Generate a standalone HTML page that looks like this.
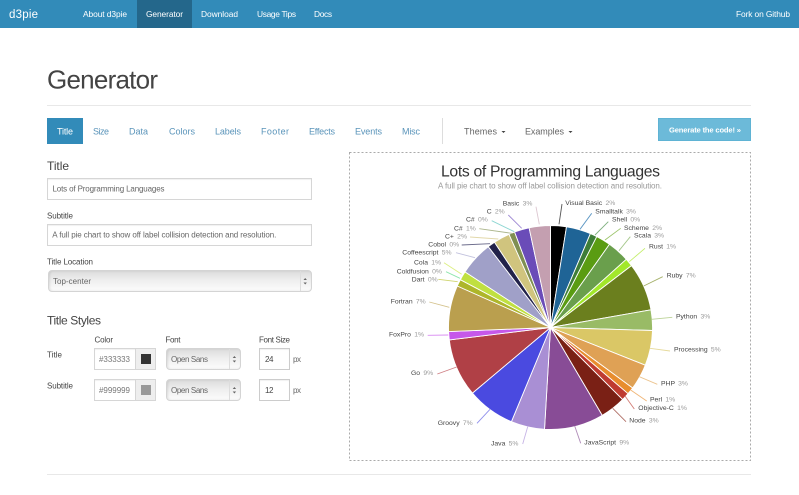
<!DOCTYPE html>
<html lang="en">
<head>
<meta charset="utf-8">
<title>d3pie Generator</title>
<style>
html,body{margin:0;padding:0;background:#fff;width:799px;height:495px;overflow:hidden}
#w{position:relative;width:799px;height:495px;overflow:hidden;filter:blur(.35px);font-family:"Liberation Sans",sans-serif}
#w div{position:absolute;box-sizing:border-box}
.in{background:#fff;border:1px solid #d6d6d6;box-shadow:inset 0 1px 1px rgba(0,0,0,.06)}
.sel{border:1px solid #d4d4d4;border-radius:4px;background:linear-gradient(#dcdcdc,#eeeeee 45%,#fcfcfc);box-shadow:inset 1px 0 2px rgba(0,0,0,.1)}
svg{position:absolute;left:0;top:0}
</style>
</head>
<body>
<div id="w">
<div style="left:0;top:0;width:799px;height:27.5px;background:#328bb9"></div>
<div style="left:136.5px;top:0;width:55.5px;height:27.5px;background:#24678b"></div>
<div style="left:47px;top:105px;width:704px;height:1px;background:#e8e8e8"></div>
<div style="left:47px;top:118px;width:36px;height:26px;background:#328bb9"></div>
<div style="left:442px;top:118px;width:1px;height:26px;background:#ddd"></div>
<div style="left:658px;top:118px;width:93px;height:23px;background:#6cbad9;border:1px solid #5fb3d4"></div>

<div class="in" style="left:47px;top:178px;width:265px;height:21.5px"></div>
<div class="in" style="left:47px;top:224px;width:265px;height:21.5px"></div>
<div class="sel" style="left:47.5px;top:270px;width:264.5px;height:21.5px"></div>
<div style="left:300px;top:271px;width:1px;height:20px;background:#ddd"></div>

<div class="in" style="left:94px;top:348px;width:62px;height:21.5px"></div>
<div style="left:135px;top:349px;width:20px;height:20px;background:#eee;border-left:1px solid #d6d6d6"></div>
<div style="left:141px;top:354px;width:10px;height:10px;background:#333"></div>
<div class="in" style="left:94px;top:379px;width:62px;height:21.5px"></div>
<div style="left:135px;top:380px;width:20px;height:20px;background:#eee;border-left:1px solid #d6d6d6"></div>
<div style="left:141px;top:385px;width:10px;height:10px;background:#999"></div>

<div class="sel" style="left:165.5px;top:348px;width:75px;height:21.5px"></div>
<div style="left:229px;top:349px;width:1px;height:20px;background:#ddd"></div>
<div class="sel" style="left:165.5px;top:379px;width:75px;height:21.5px"></div>
<div style="left:229px;top:380px;width:1px;height:20px;background:#ddd"></div>

<div class="in" style="left:259px;top:348px;width:31px;height:21.5px;border-color:#ccc"></div>
<div class="in" style="left:259px;top:379px;width:31px;height:21.5px;border-color:#ccc"></div>
<div style="left:47px;top:474px;width:704px;height:1px;background:#e8e8e8"></div>

<svg width="799" height="495" viewBox="0 0 799 495" font-family="'Liberation Sans',sans-serif">
<rect x="349.5" y="152.5" width="401" height="308" fill="none" stroke="#aaa" stroke-width="1" stroke-dasharray="2 2"/>
<g fill="#fff" font-size="8.4">
<text x="9" y="18" font-size="11.5" textLength="29">d3pie</text>
<text x="83" y="17" textLength="44">About d3pie</text>
<text x="146" y="17" textLength="37">Generator</text>
<text x="201" y="17" textLength="37">Download</text>
<text x="257" y="17" textLength="39">Usage Tips</text>
<text x="314" y="17" textLength="18">Docs</text>
<text x="736" y="17" textLength="54">Fork on Github</text>
</g>
<text x="47" y="88.5" font-size="26" fill="#444" textLength="111">Generator</text>
<g font-size="9" fill="#5a94ba">
<text x="57" y="134.5" fill="#fff" textLength="16">Title</text>
<text x="93" y="134.5" textLength="16">Size</text>
<text x="129" y="134.5" textLength="19">Data</text>
<text x="169" y="134.5" textLength="26">Colors</text>
<text x="215" y="134.5" textLength="26">Labels</text>
<text x="261" y="134.5" textLength="28">Footer</text>
<text x="309" y="134.5" textLength="26">Effects</text>
<text x="355" y="134.5" textLength="27">Events</text>
<text x="402" y="134.5" textLength="18">Misc</text>
</g>
<g font-size="9" fill="#666">
<text x="464" y="134.5" textLength="33">Themes</text>
<text x="525" y="134.5" textLength="39">Examples</text>
</g>
<path d="M501.5 131h4l-2 2zM568.5 131h4l-2 2z" fill="#444"/>
<text x="669" y="132.5" font-size="7.6" font-weight="bold" fill="#fff" textLength="72">Generate the code! »</text>

<g font-size="12" fill="#444">
<text x="47" y="170" textLength="22">Title</text>
<text x="47" y="324.5" textLength="54">Title Styles</text>
</g>
<g font-size="8" fill="#444">
<text x="47" y="218.7" textLength="26">Subtitle</text>
<text x="47" y="264.7" textLength="46">Title Location</text>
<text x="94.5" y="342.3" textLength="18.5">Color</text>
<text x="165.5" y="342.3" textLength="15">Font</text>
<text x="259" y="342.3" textLength="31">Font Size</text>
<text x="47" y="357.3" textLength="15">Title</text>
<text x="47" y="388.3" textLength="26">Subtitle</text>
</g>
<g font-size="8" fill="#666">
<text x="52.5" y="191.5" textLength="112">Lots of Programming Languages</text>
<text x="52.3" y="237.7" textLength="224">A full pie chart to show off label collision detection and resolution.</text>
<text x="53" y="284" textLength="38">Top-center</text>
<text x="99" y="362" textLength="31" fill="#777">#333333</text>
<text x="99" y="392.8" textLength="31" fill="#777">#999999</text>
<text x="171" y="362" textLength="37">Open Sans</text>
<text x="171" y="392.8" textLength="37">Open Sans</text>
<text x="265" y="362" textLength="8.5" fill="#444">24</text>
<text x="265" y="392.8" textLength="8.5" fill="#444">12</text>
<text x="293" y="362" textLength="8">px</text>
<text x="293" y="392.8" textLength="8">px</text>
</g>
<path d="M303.5 280l1.7-2 1.7 2zM303.5 282.5l1.7 2 1.7-2zM232.7 358l1.7-2 1.7 2zM232.7 360.5l1.7 2 1.7-2zM232.7 389l1.7-2 1.7 2zM232.7 391.5l1.7 2 1.7-2z" fill="#666"/>

<text x="441" y="176.7" font-size="15.7" fill="#333" textLength="219">Lots of Programming Languages</text>
<text x="438" y="188.3" font-size="8" fill="#999" textLength="224">A full pie chart to show off label collision detection and resolution.</text>

<g stroke="#fff" stroke-width=".9" stroke-linejoin="round">
<path fill="#000000" d="M550.5 327.5L550.5 225.5A102 102 0 0 1 566.5 226.75Z"/>
<path fill="#1f6496" d="M550.5 327.5L566.5 226.75A102 102 0 0 1 590.4 233.6Z"/>
<path fill="#3e7d38" d="M550.5 327.5L590.4 233.6A102 102 0 0 1 596.8 236.6Z"/>
<path fill="#5a9c12" d="M550.5 327.5L596.8 236.6A102 102 0 0 1 609.5 244.3Z"/>
<path fill="#6a9f4c" d="M550.5 327.5L609.5 244.3A102 102 0 0 1 626.3 259.3Z"/>
<path fill="#a2e82a" d="M550.5 327.5L626.3 259.3A102 102 0 0 1 631.5 265.6Z"/>
<path fill="#6b7f1e" d="M550.5 327.5L631.5 265.6A102 102 0 0 1 651 309.8Z"/>
<path fill="#99bb66" d="M550.5 327.5L651 309.8A102 102 0 0 1 652.5 330.5Z"/>
<path fill="#dac766" d="M550.5 327.5L652.5 330.5A102 102 0 0 1 645.3 365.2Z"/>
<path fill="#dfa155" d="M550.5 327.5L645.3 365.2A102 102 0 0 1 632.6 388Z"/>
<path fill="#e88d2e" d="M550.5 327.5L632.6 388A102 102 0 0 1 628 393.7Z"/>
<path fill="#bf3b30" d="M550.5 327.5L628 393.7A102 102 0 0 1 622.6 399.6Z"/>
<path fill="#7a2015" d="M550.5 327.5L622.6 399.6A102 102 0 0 1 602.2 415.4Z"/>
<path fill="#884c96" d="M550.5 327.5L602.2 415.4A102 102 0 0 1 544.5 429.3Z"/>
<path fill="#a98fd4" d="M550.5 327.5L544.5 429.3A102 102 0 0 1 511.4 421.7Z"/>
<path fill="#4a4ae0" d="M550.5 327.5L511.4 421.7A102 102 0 0 1 472.4 393.1Z"/>
<path fill="#b04046" d="M550.5 327.5L472.4 393.1A102 102 0 0 1 449.3 339.9Z"/>
<path fill="#c658ea" d="M550.5 327.5L449.3 339.9A102 102 0 0 1 448.6 331.6Z"/>
<path fill="#ba9f4e" d="M550.5 327.5L448.6 331.6A102 102 0 0 1 457.3 286Z"/>
<path fill="#aeb62a" d="M550.5 327.5L457.3 286A102 102 0 0 1 460.4 279.7Z"/>
<path fill="#c0e040" d="M550.5 327.5L460.4 279.7A102 102 0 0 1 465 271.9Z"/>
<path fill="#a0a0c8" d="M550.5 327.5L465 271.9A102 102 0 0 1 488.3 246.7Z"/>
<path fill="#22224a" d="M550.5 327.5L488.3 246.7A102 102 0 0 1 494.5 242.2Z"/>
<path fill="#d0c47e" d="M550.5 327.5L494.5 242.2A102 102 0 0 1 509 234.3Z"/>
<path fill="#7f8f52" d="M550.5 327.5L509 234.3A102 102 0 0 1 514.6 232Z"/>
<path fill="#6a4cb8" d="M550.5 327.5L514.6 232A102 102 0 0 1 529.1 227.8Z"/>
<path fill="#c49fb0" d="M550.5 327.5L529.1 227.8A102 102 0 0 1 550.5 225.5Z"/>
</g>

<g fill="none" stroke-width=".9">
<path stroke="#555" d="M562 204L559 224.3"/>
<path stroke="#5d97c4" d="M591.7 213.3L580 229.3"/>
<path stroke="#7fb07f" d="M608.3 221.7L595 235"/>
<path stroke="#9cc46b" d="M620.7 228.3L605 240"/>
<path stroke="#a6c88c" d="M630.3 236.7L619 250.7"/>
<path stroke="#c4ee6c" d="M645 248.3L629.3 261.7"/>
<path stroke="#a5b16a" d="M662.7 276.7L643.7 286"/>
<path stroke="#bcd398" d="M672.3 317.3L651.7 319.3"/>
<path stroke="#e6da9c" d="M670 351L650 348.3"/>
<path stroke="#ecc48f" d="M657.3 384.3L639.3 376.7"/>
<path stroke="#f0b678" d="M646.7 401L630.7 390"/>
<path stroke="#d27d76" d="M634.3 409L625 396"/>
<path stroke="#b06f66" d="M626 421.7L612.7 408.3"/>
<path stroke="#b08cb8" d="M580.7 443.3L574.7 426"/>
<path stroke="#c6b4e6" d="M522.7 444L527.7 426.7"/>
<path stroke="#9090ec" d="M477 423.3L490 409.3"/>
<path stroke="#cf7f84" d="M437.3 374L456.7 367"/>
<path stroke="#d98cf2" d="M427.7 335.3L448.3 335"/>
<path stroke="#d4c28c" d="M429.3 302L449.3 307.3"/>
<path stroke="#cfd46f" d="M438.3 279.3L457.7 281.7"/>
<path stroke="#8fe6ae" d="M446 271.7L460 278.3"/>
<path stroke="#dcef82" d="M444 262.7L461.7 274.3"/>
<path stroke="#c2c2de" d="M456 252.7L475 257.7"/>
<path stroke="#6a6a8a" d="M461.7 245L490 243.7"/>
<path stroke="#e2d8aa" d="M470 237L498.3 239"/>
<path stroke="#acb68c" d="M479.3 228.7L511.7 233.3"/>
<path stroke="#8cd6d2" d="M491.7 220.7L514.3 231.7"/>
<path stroke="#9f8ad4" d="M508.3 215L521.7 228.3"/>
<path stroke="#dcc6d0" d="M536 206.7L539.3 224.3"/>
</g>

<g font-size="6.8" fill="#444">
<text x="502.7" y="205.7">Basic <tspan dx="1.4" fill="#999">3%</tspan></text>
<text x="486.7" y="213.5">C <tspan dx="1.4" fill="#999">2%</tspan></text>
<text x="466" y="221.7">C# <tspan dx="1.4" fill="#999">0%</tspan></text>
<text x="454" y="230.5">C# <tspan dx="1.4" fill="#999">1%</tspan></text>
<text x="445" y="238.5">C+ <tspan dx="1.4" fill="#999">2%</tspan></text>
<text x="428.3" y="246.7">Cobol <tspan dx="1.4" fill="#999">0%</tspan></text>
<text x="402.3" y="254.7">Coffeescript <tspan dx="1.4" fill="#999">5%</tspan></text>
<text x="414" y="264.3">Cola <tspan dx="1.4" fill="#999">1%</tspan></text>
<text x="396.7" y="273.3">Coldfusion <tspan dx="1.4" fill="#999">0%</tspan></text>
<text x="411.7" y="281.3">Dart <tspan dx="1.4" fill="#999">0%</tspan></text>
<text x="390.7" y="303.3">Fortran <tspan dx="1.4" fill="#999">7%</tspan></text>
<text x="389" y="336.7">FoxPro <tspan dx="1.4" fill="#999">1%</tspan></text>
<text x="411" y="375">Go <tspan dx="1.4" fill="#999">9%</tspan></text>
<text x="437.7" y="425">Groovy <tspan dx="1.4" fill="#999">7%</tspan></text>
<text x="491" y="445.3">Java <tspan dx="1.4" fill="#999">5%</tspan></text>
<text x="584.3" y="444.7">JavaScript <tspan dx="1.4" fill="#999">9%</tspan></text>
<text x="629.3" y="422.3">Node <tspan dx="1.4" fill="#999">3%</tspan></text>
<text x="638.3" y="410">Objective-C <tspan dx="1.4" fill="#999">1%</tspan></text>
<text x="650" y="401.7">Perl <tspan dx="1.4" fill="#999">1%</tspan></text>
<text x="661" y="385.7">PHP <tspan dx="1.4" fill="#999">3%</tspan></text>
<text x="674" y="351.7">Processing <tspan dx="1.4" fill="#999">5%</tspan></text>
<text x="676" y="318.3">Python <tspan dx="1.4" fill="#999">3%</tspan></text>
<text x="666.7" y="277.7">Ruby <tspan dx="1.4" fill="#999">7%</tspan></text>
<text x="649" y="248.7">Rust <tspan dx="1.4" fill="#999">1%</tspan></text>
<text x="634" y="237.7">Scala <tspan dx="1.4" fill="#999">3%</tspan></text>
<text x="624" y="230">Scheme <tspan dx="1.4" fill="#999">2%</tspan></text>
<text x="612" y="221.7">Shell <tspan dx="1.4" fill="#999">0%</tspan></text>
<text x="595.3" y="213.5">Smalltalk <tspan dx="1.4" fill="#999">3%</tspan></text>
<text x="565.3" y="205">Visual Basic <tspan dx="1.4" fill="#999">2%</tspan></text>
</g>
</svg>
</div>
</body>
</html>
